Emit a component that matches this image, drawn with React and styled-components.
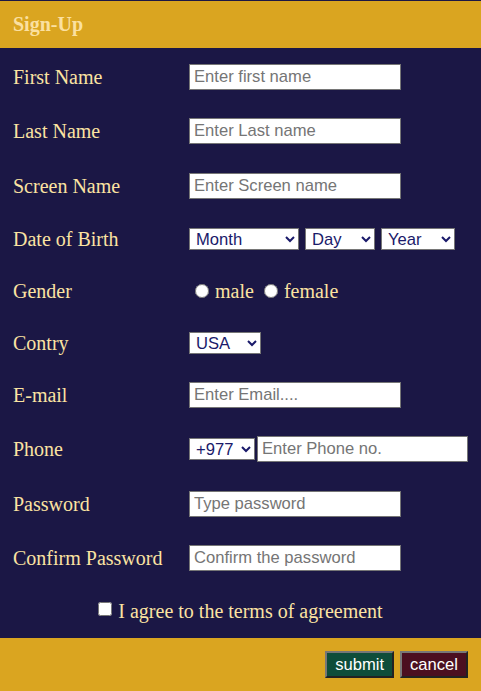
import React from "react";
import styled, { createGlobalStyle } from "styled-components";

const GlobalStyle = createGlobalStyle`
  html, body {
    margin: 0;
    padding: 0;
    background: #1b1745;
  }
  * {
    box-sizing: border-box;
  }
`;

const Page = styled.div`
  width: 481px;
  height: 691px;
  padding-top: 1px;
  background: #1b1745;
  display: flex;
  flex-direction: column;
  font-family: "Liberation Serif", "Times New Roman", serif;
`;

const Header = styled.div`
  height: 47px;
  background: #daa520;
  display: flex;
  align-items: center;
  padding-left: 13px;
  color: #fbe0a0;
  font-weight: bold;
  font-size: 20px;
`;

const FormBody = styled.div`
  flex: 1;
  padding-top: 3px;
  display: flex;
  flex-direction: column;
`;

const Row = styled.div`
  height: ${(props) => props.h || 54}px;
  display: grid;
  grid-template-columns: 176px 1fr;
  align-items: center;
  padding-left: 13px;
`;

const Label = styled.label`
  color: #fbe3a2;
  font-size: 20px;
`;

const Field = styled.div`
  display: flex;
  align-items: center;
  gap: ${(props) => props.gap || 0}px;
`;

const TextInput = styled.input`
  width: ${(props) => props.w || 212}px;
  height: 26px;
  border: 1px solid #767676;
  border-radius: 0;
  padding: 0 4px;
  font-family: "Liberation Sans", Arial, sans-serif;
  font-size: 16.6px;
  background: #fff;
  outline: none;
  &::placeholder {
    color: #757575;
  }
`;

const Select = styled.select`
  width: ${(props) => props.w}px;
  height: 22px;
  border: 1px solid #767676;
  border-radius: 0;
  background: #fff;
  font-family: "Liberation Sans", Arial, sans-serif;
  font-size: 16.6px;
  color: #1a1a6a;
  padding: 0 2px;
`;

const RadioGroup = styled.div`
  display: flex;
  align-items: center;
  color: #fbe3a2;
  font-size: 20px;
`;

const Radio = styled.input`
  width: 14px;
  height: 14px;
  margin: 0 6px 0 ${(props) => props.ml}px;
`;

const AgreeRow = styled.div`
  height: 52px;
  display: flex;
  align-items: center;
  justify-content: center;
  color: #fbe3a2;
  font-size: 20px;
`;

const Checkbox = styled.input`
  width: 14px;
  height: 14px;
  margin: 0 6px 4px 0;
`;

const Footer = styled.div`
  height: 53px;
  background: #daa520;
  display: flex;
  align-items: center;
  justify-content: flex-end;
  gap: 6px;
  padding-right: 13px;
`;

const Button = styled.button`
  height: 27px;
  padding: 0 8px;
  background: ${(props) => props.bg};
  color: #fff;
  border: 2px outset #777;
  font-family: "Liberation Sans", Arial, sans-serif;
  font-size: 16.6px;
`;

export default function App() {
  return (
    <>
      <GlobalStyle />
      <Page>
        <Header>Sign-Up</Header>
        <FormBody>
          <Row h={52}>
            <Label>First Name</Label>
            <Field>
              <TextInput placeholder="Enter first name" />
            </Field>
          </Row>
          <Row h={56}>
            <Label>Last Name</Label>
            <Field>
              <TextInput placeholder="Enter Last name" />
            </Field>
          </Row>
          <Row h={54}>
            <Label>Screen Name</Label>
            <Field>
              <TextInput placeholder="Enter Screen name" />
            </Field>
          </Row>
          <Row h={52}>
            <Label>Date of Birth</Label>
            <Field gap={6}>
              <Select w={110}>
                <option>Month</option>
              </Select>
              <Select w={70}>
                <option>Day</option>
              </Select>
              <Select w={74}>
                <option>Year</option>
              </Select>
            </Field>
          </Row>
          <Row h={52}>
            <Label>Gender</Label>
            <RadioGroup>
              <Radio type="radio" name="gender" ml={6} />
              male
              <Radio type="radio" name="gender" ml={10} />
              female
            </RadioGroup>
          </Row>
          <Row h={52}>
            <Label>Contry</Label>
            <Field>
              <Select w={72}>
                <option>USA</option>
              </Select>
            </Field>
          </Row>
          <Row h={52}>
            <Label>E-mail</Label>
            <Field>
              <TextInput placeholder="Enter Email...." />
            </Field>
          </Row>
          <Row h={56}>
            <Label>Phone</Label>
            <Field gap={2}>
              <Select w={66}>
                <option>+977</option>
              </Select>
              <TextInput w={211} placeholder="Enter Phone no." />
            </Field>
          </Row>
          <Row h={54}>
            <Label>Password</Label>
            <Field>
              <TextInput type="password" placeholder="Type password" />
            </Field>
          </Row>
          <Row h={54}>
            <Label>Confirm Password</Label>
            <Field>
              <TextInput type="password" placeholder="Confirm the password" />
            </Field>
          </Row>
          <AgreeRow>
            <Checkbox type="checkbox" />
            I agree to the terms of agreement
          </AgreeRow>
        </FormBody>
        <Footer>
          <Button bg="#0f4d3a">submit</Button>
          <Button bg="#4b0f20">cancel</Button>
        </Footer>
      </Page>
    </>
  );
}
